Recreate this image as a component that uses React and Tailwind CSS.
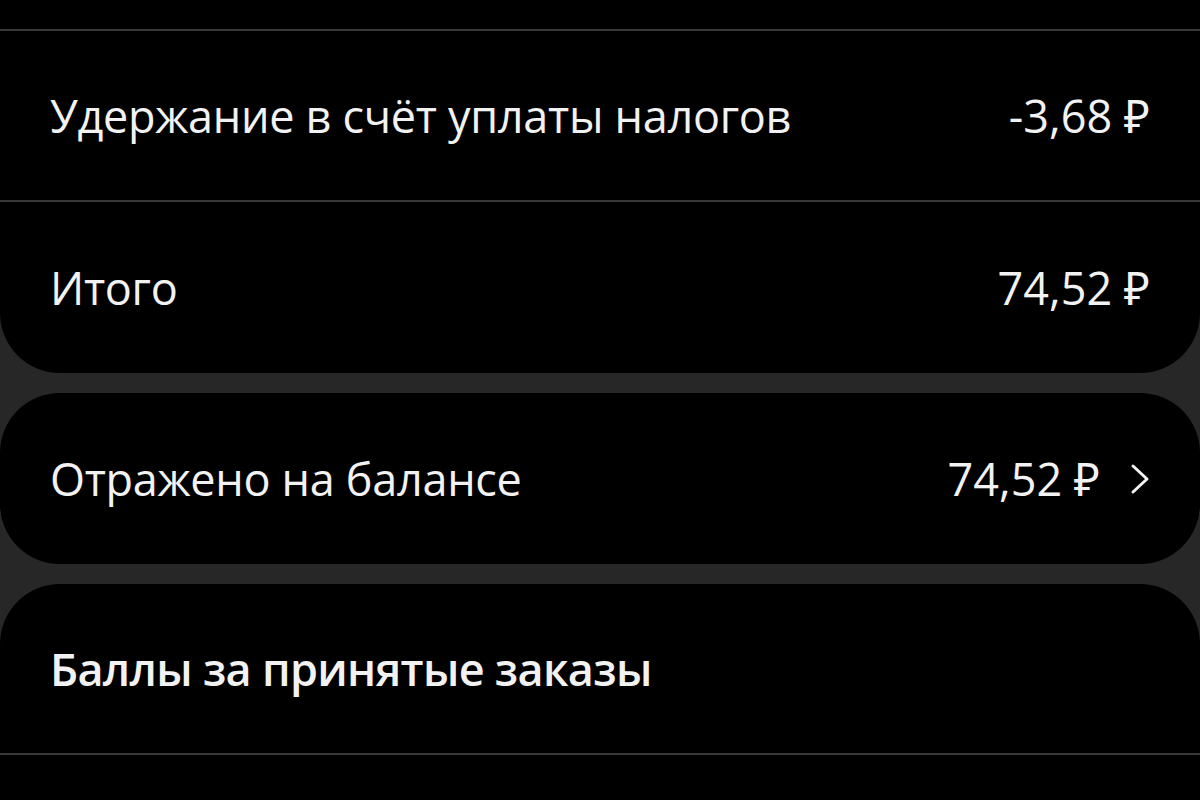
import React from 'react';

const Chevron = () => (
    <svg width="20" height="32" viewBox="0 0 20 32" fill="none" className="shrink-0">
        <path d="M3 3 L17 16 L3 29" stroke="#f2f2f2" strokeWidth="3" strokeLinecap="round" strokeLinejoin="round" />
    </svg>
)

const Row = ({ label, value, chevron, bold, divider }) => (
    <div className={`flex items-center justify-between h-[171px] pl-[50px] pr-[50px] ${divider ? 'border-b-2 border-[#383838]' : ''}`}>
        <span className={`text-[45px] text-[#f2f2f2] ${bold ? 'font-semibold tracking-[-0.7px]' : 'font-normal tracking-[-0.3px]'}`}>{label}</span>
        {value && (
            <div className="flex items-center gap-[30px]">
                <span className="text-[45px] text-[#f2f2f2] tracking-[0px]">{value}</span>
                {chevron && <Chevron />}
            </div>
        )}
    </div>
)

const App = () => {
    return (
        <div className="h-screen w-full overflow-hidden bg-[#272727]" style={{ fontFamily: '"Open Sans", "Noto Sans", sans-serif' }}>
            <div className="flex flex-col gap-[20px] -mt-[140px]">
                {/* payout breakdown */}
                <div className="bg-black rounded-[60px] flex flex-col">
                    <div className="h-[171px] border-b-2 border-[#383838]" />
                    <Row label="Удержание в счёт уплаты налогов" value="-3,68 ₽" divider />
                    <Row label="Итого" value="74,52 ₽" />
                </div>

                {/* balance link */}
                <div className="bg-black rounded-[60px]">
                    <Row label="Отражено на балансе" value="74,52 ₽" chevron />
                </div>

                {/* points */}
                <div className="bg-black rounded-[60px] flex flex-col">
                    <Row label="Баллы за принятые заказы" bold divider />
                    <div className="h-[171px]" />
                </div>
            </div>
        </div>
    )
}

export default App;
